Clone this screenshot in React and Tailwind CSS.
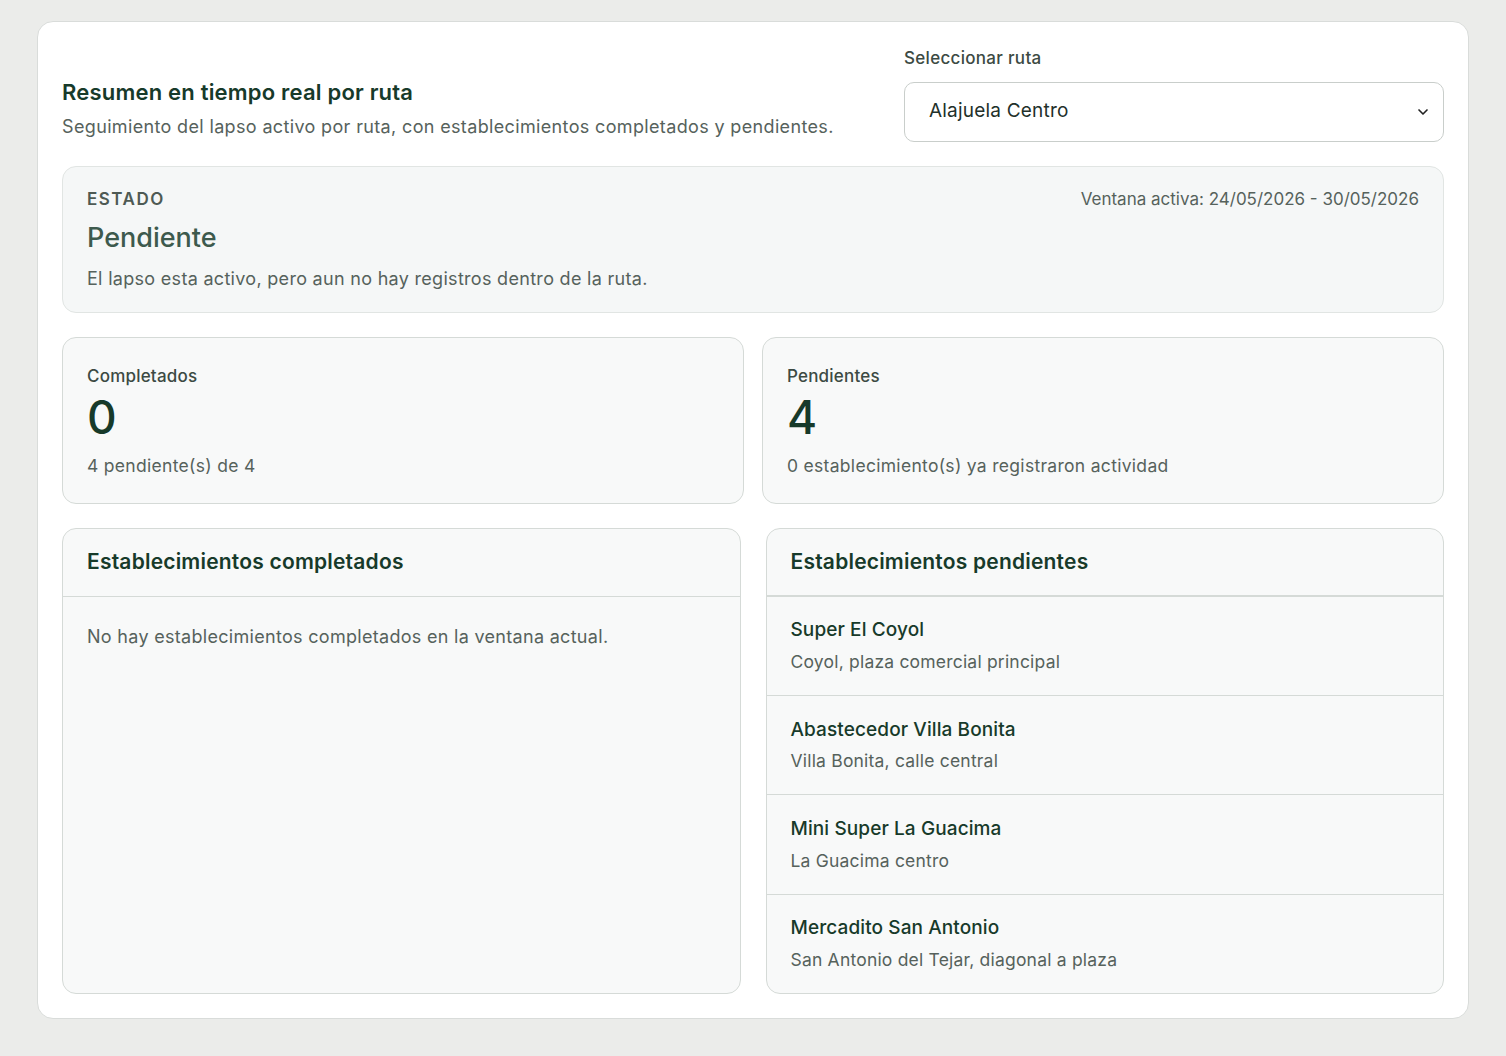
export default function App() {
  const items = [
    ["Super El Coyol", "Coyol, plaza comercial principal"],
    ["Abastecedor Villa Bonita", "Villa Bonita, calle central"],
    ["Mini Super La Guacima", "La Guacima centro"],
    ["Mercadito San Antonio", "San Antonio del Tejar, diagonal a plaza"],
  ];
  return (
    <div className="min-h-[1056px] bg-[#ebecea] pt-[21px] px-[37px] text-[#1c3a2c]" style={{ fontFamily: "Inter, 'Noto Sans', sans-serif" }}>
      <div className="bg-white rounded-[16px] border border-[#d9dcda] px-[24px] pt-[24px] pb-[24px] h-[998px] flex flex-col">
        <div className="flex justify-between items-end">
          <div className="pb-[2px]">
            <h1 className="text-[22px] font-semibold text-[#173a2a] tracking-[0.2px]">Resumen en tiempo real por ruta</h1>
            <p className="text-[18px] text-[#56625c] mt-[4px] tracking-[0.35px]">Seguimiento del lapso activo por ruta, con establecimientos completados y pendientes.</p>
          </div>
          <div className="w-[540px]">
            <div className="text-[17px] text-[#3c4a43] font-medium mb-[10px] tracking-[0.3px]">Seleccionar ruta</div>
            <div className="h-[60px] border border-[#c9cecb] rounded-[10px] flex items-center justify-between px-[24px] pr-[12px]">
              <span className="text-[19px] text-[#22302a] tracking-[0.2px]">Alajuela Centro</span>
              <svg width="16" height="16" viewBox="0 0 24 24" fill="none" stroke="#222" strokeWidth="2.5" strokeLinecap="round" strokeLinejoin="round"><path d="M6 9l6 6 6-6" /></svg>
            </div>
          </div>
        </div>
        <div className="mt-[24px] h-[147px] bg-[#f5f7f7] border border-[#e1e5e3] rounded-[14px] px-[24px] pt-[20px]">
          <div className="flex justify-between">
            <span className="text-[17px] font-semibold tracking-[1.5px] text-[#4e5a54]">ESTADO</span>
            <span className="text-[17px] text-[#56625c]">Ventana activa: 24/05/2026 - 30/05/2026</span>
          </div>
          <div className="text-[27px] font-medium text-[#3d5a4d] mt-[6px]">Pendiente</div>
          <div className="text-[18px] text-[#56625c] mt-[6px] tracking-[0.3px]">El lapso esta activo, pero aun no hay registros dentro de la ruta.</div>
        </div>
        <div className="mt-[24px] grid grid-cols-2 gap-[18px]">
          {[["Completados", "0", "4 pendiente(s) de 4"], ["Pendientes", "4", "0 establecimiento(s) ya registraron actividad"]].map(([a, b, c]) => (
            <div key={a} className="h-[167px] bg-[#f8f9f9] border border-[#d5dad7] rounded-[14px] px-[24px] pt-[26px]">
              <div className="text-[17px] font-medium text-[#3c4a43] tracking-[0.2px]">{a}</div>
              <div className="text-[46px] leading-[52px] font-medium text-[#173a2a] mt-[2px]">{b}</div>
              <div className="text-[17.5px] text-[#56625c] mt-[10px] tracking-[0.3px]">{c}</div>
            </div>
          ))}
        </div>
        <div className="mt-[24px] grid grid-cols-2 gap-[25px] flex-1">
          <div className="bg-[#f8f9f9] border border-[#d5dad7] rounded-[14px] overflow-hidden">
            <div className="h-[68px] flex items-center px-[24px] border-b border-[#d5dad7] text-[21px] font-semibold text-[#173a2a] tracking-[0.2px]">Establecimientos completados</div>
            <div className="px-[24px] pt-[26px] text-[18px] text-[#56625c] tracking-[0.3px]">No hay establecimientos completados en la ventana actual.</div>
          </div>
          <div className="bg-[#f8f9f9] border border-[#d5dad7] rounded-[14px] overflow-hidden flex flex-col">
            <div className="h-[68px] flex items-center px-[24px] border-b-2 border-[#d5dad7] text-[21px] font-semibold text-[#173a2a] tracking-[0.2px]">Establecimientos pendientes</div>
            {items.map(([n, d], i) => (
              <div key={n} className={"flex-1 px-[24px] flex flex-col justify-center " + (i < 3 ? "border-b border-[#d5dad7]" : "")}>
                <div className="text-[19px] font-medium text-[#173a2a] tracking-[0.1px]">{n}</div>
                <div className="text-[17.5px] text-[#56625c] mt-[4px] tracking-[0.2px]">{d}</div>
              </div>
            ))}
          </div>
        </div>
      </div>
    </div>
  );
}
